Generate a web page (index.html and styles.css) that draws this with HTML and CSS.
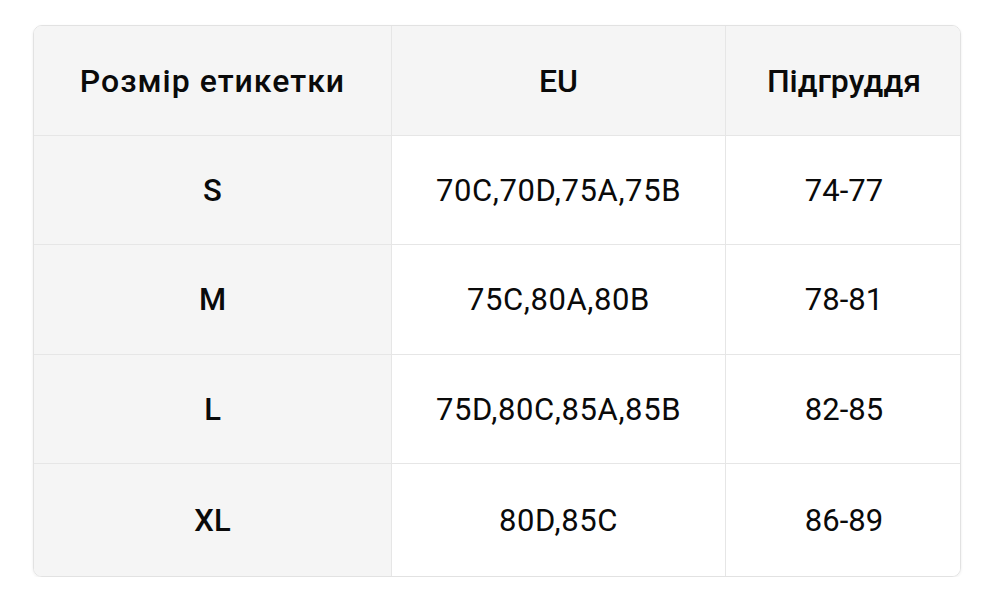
FILE: index.html
```html
<!DOCTYPE html>
<html lang="uk">
<head>
<meta charset="utf-8">
<link rel="stylesheet" href="styles.css">
</head>
<body>
<div class="page">
  <div class="table">
    <div class="cell head first wide">Розмір етикетки</div>
    <div class="cell head">EU</div>
    <div class="cell head last">Підгруддя</div>

    <div class="cell first label">S</div>
    <div class="cell spaced">70C,70D,75A,75B</div>
    <div class="cell last">74-77</div>

    <div class="cell first label">M</div>
    <div class="cell spaced">75C,80A,80B</div>
    <div class="cell last">78-81</div>

    <div class="cell first label">L</div>
    <div class="cell spaced">75D,80C,85A,85B</div>
    <div class="cell last">82-85</div>

    <div class="cell first label bottom">XL</div>
    <div class="cell spaced bottom">80D,85C</div>
    <div class="cell last bottom">86-89</div>
  </div>
</div>
</body>
</html>
```

FILE: styles.css
```css
html, body {
  margin: 0;
  padding: 0;
  background: #ffffff;
}
.page {
  padding: 25px 0 0 33px;
}
.table {
  width: 928px;
  display: grid;
  grid-template-columns: 358px 334px 236px;
  grid-template-rows: 110px 109px 110px 109px 112px;
  border: 1px solid #e2e2e2;
  border-radius: 9px;
  box-shadow: 0 1px 3px rgba(0,0,0,0.08);
  overflow: hidden;
  box-sizing: border-box;
  font-family: Roboto, "Noto Sans", sans-serif;
  color: #0a0a0a;
}
.cell {
  display: flex;
  align-items: center;
  justify-content: center;
  font-size: 31px;
  font-weight: 400;
  border-right: 1px solid #e6e6e6;
  border-bottom: 1px solid #e6e6e6;
  background: #ffffff;
}
.cell.last {
  border-right: none;
}
.cell.bottom {
  border-bottom: none;
}
.cell.head {
  background: #f5f5f5;
  font-weight: 500;
  font-size: 32px;
}
.cell.wide {
  letter-spacing: 1px;
}
.cell.spaced {
  letter-spacing: 0.6px;
}
.cell.first {
  background: #f5f5f5;
}
.cell.label {
  font-weight: 500;
}
```
